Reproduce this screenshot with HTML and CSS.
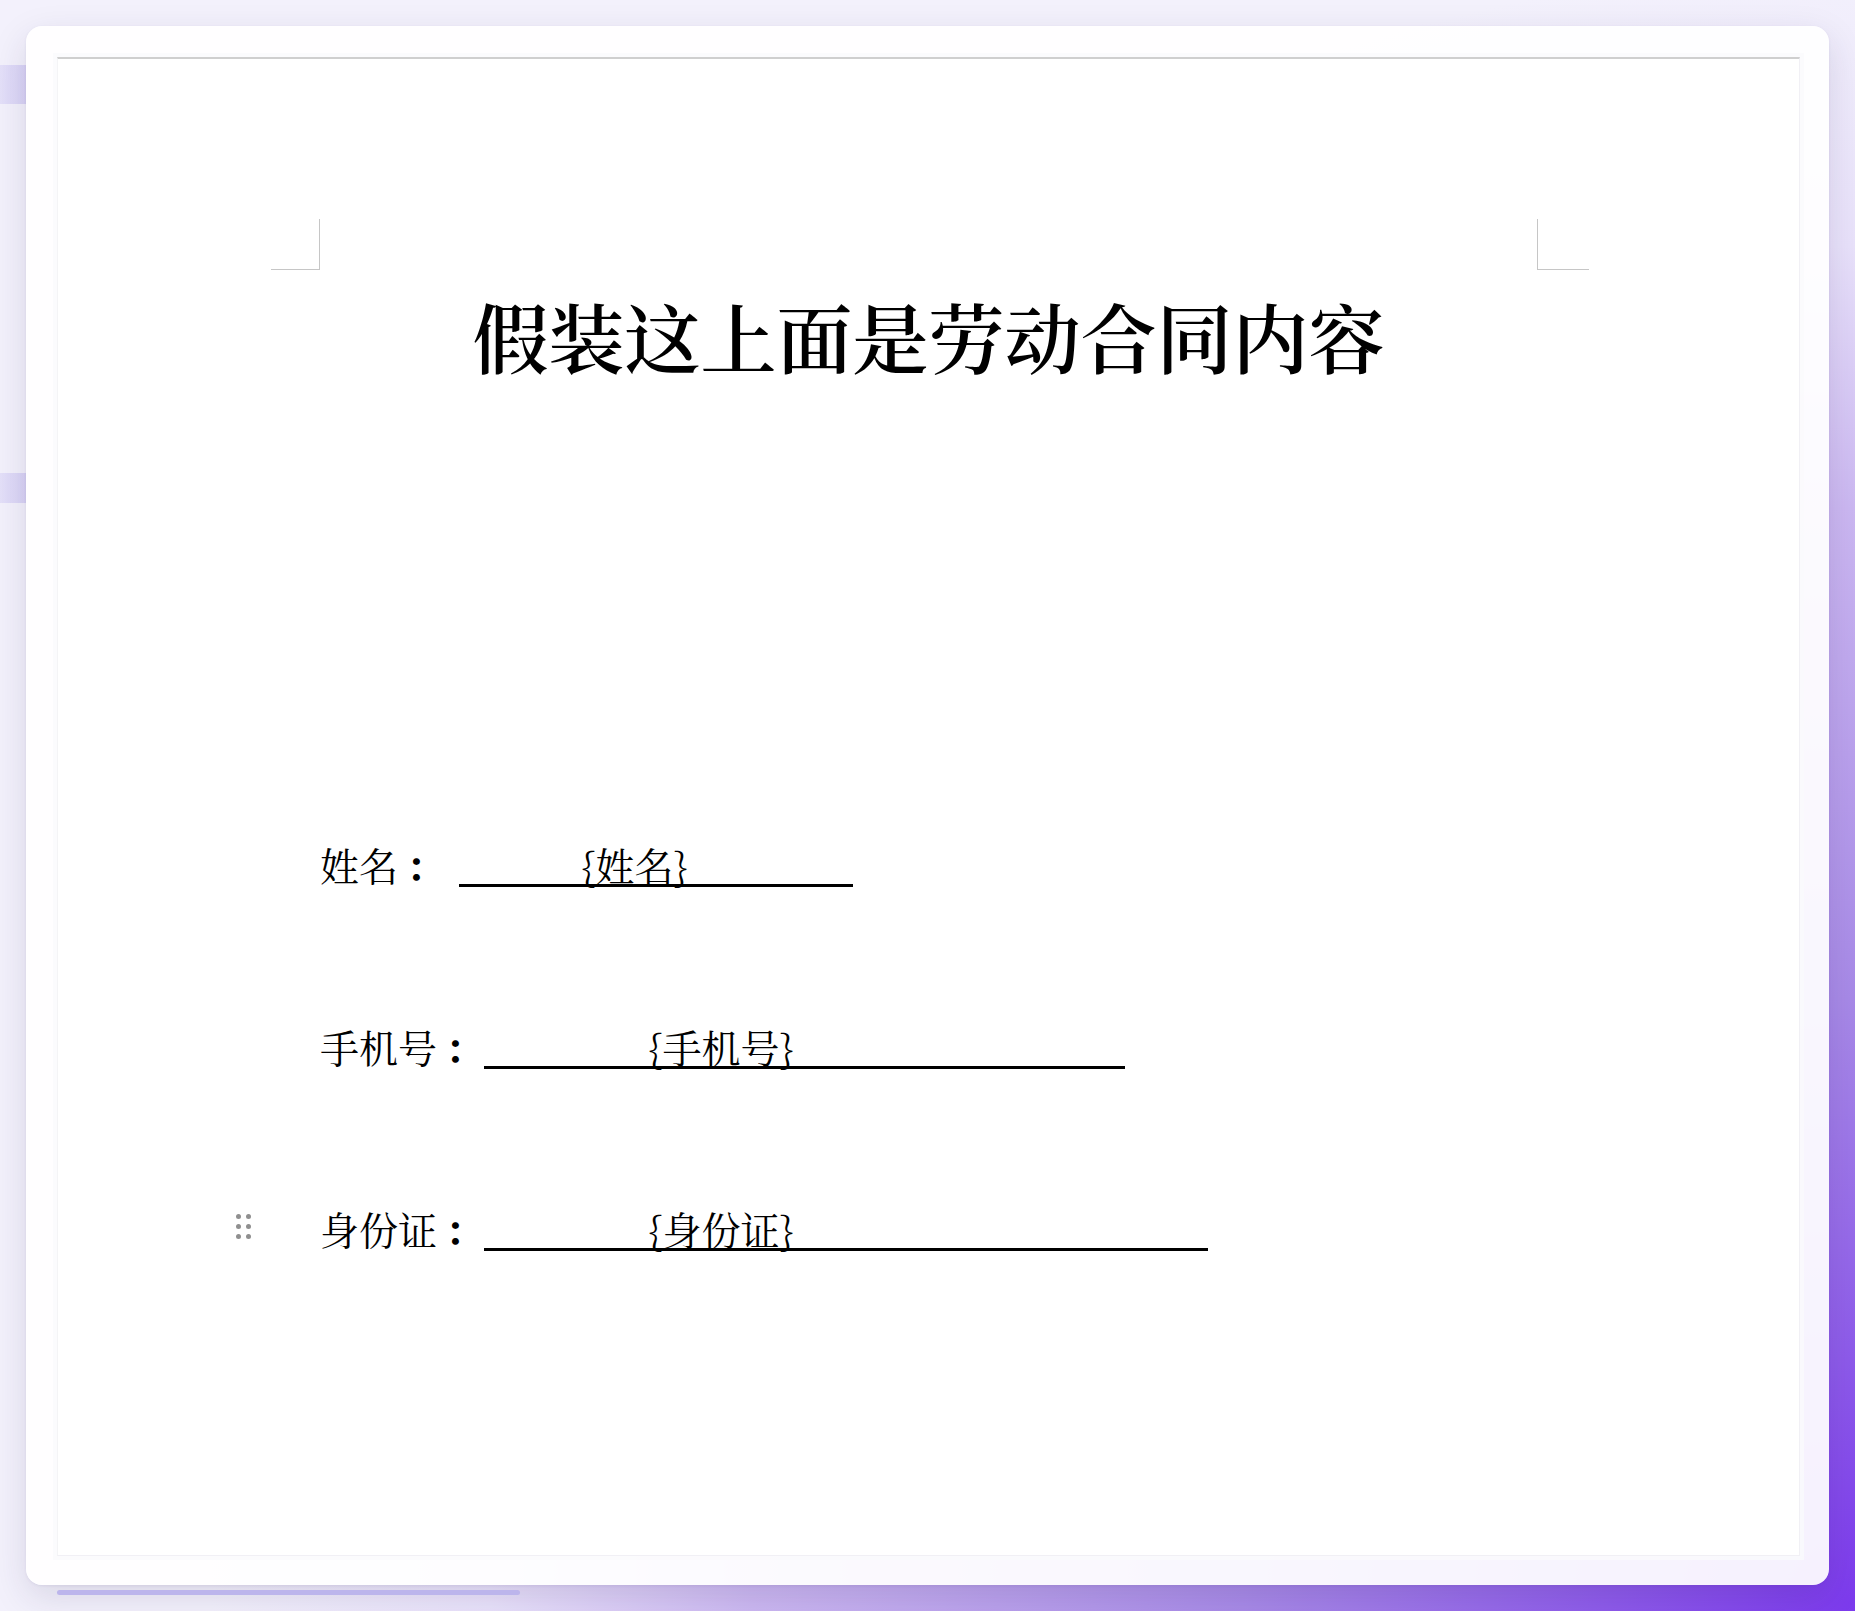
FILE: index.html
```html
<!DOCTYPE html>
<html lang="zh-CN">
<head>
<meta charset="utf-8">
<title>劳动合同</title>
<link rel="stylesheet" href="styles.css">
</head>
<body>
<div class="app">
  <aside class="sidebar">
    <div class="band band-one"></div>
    <div class="band band-two"></div>
  </aside>
  <main class="main">
    <section class="card">
      <div class="page">
        <div class="sheet">
          <div class="marks">
            <span class="mark mark-left"></span>
            <span class="mark mark-right"></span>
          </div>
          <h1 class="title">假装这上面是劳动合同内容</h1>
          <p class="row row-first">姓名<span class="colon">：</span><span class="field field-name gap-wide">{姓名}</span></p>
          <p class="row">手机号<span class="colon">：</span><span class="field field-phone">{手机号}</span></p>
          <p class="row">
            <span class="handle" aria-hidden="true">
              <i></i><i></i><i></i><i></i><i></i><i></i>
            </span>身份证<span class="colon">：</span><span class="field field-id">{身份证}</span></p>
        </div>
      </div>
    </section>
    <div class="scrollbar"></div>
  </main>
</div>
</body>
</html>
```

FILE: styles.css
```css
html, body {
  margin: 0;
  padding: 0;
  height: 100%;
}

body {
  overflow: hidden;
  background:
    radial-gradient(circle 1750px at 100% 100%, #7c3aed 0%, #a88ae8 35%, #ccb8f2 63%, #e9e2fb 78%, rgba(244, 241, 253, 0) 94%),
    #f3f1fc;
  font-family: "Noto Serif CJK SC", "Liberation Serif", "Noto Sans CJK SC", serif;
  color: #000;
}

.app {
  display: flex;
  height: 1611px;
}

.sidebar {
  width: 26px;
  flex: none;
  padding-top: 65px;
  box-sizing: border-box;
}

.band {
  background: linear-gradient(90deg, #e4e0f9 0%, #d9d3f6 100%);
}

.band-one {
  height: 39px;
}

.band-two {
  height: 30px;
  margin-top: 369px;
}

.main {
  flex: 1;
  display: flex;
  flex-direction: column;
  padding: 26px 26px 0 0;
  min-width: 0;
}

.card {
  height: 1559px;
  box-sizing: border-box;
  padding: 31px 29px 29px 31px;
  border-radius: 16px;
  background: rgba(255, 255, 255, 0.93);
  box-shadow: 0 12px 36px rgba(40, 30, 70, 0.13), 0 1px 3px rgba(70, 50, 130, 0.08);
  display: flex;
}

.page {
  flex: 1;
  background: #fff;
  border-top: 2px solid #cfcfcf;
  border-left: 1px solid #f4f4f6;
  border-right: 1px solid #f1f0f5;
  border-bottom: 1px solid #f1f0f5;
  box-shadow: 0 0 0 4px rgba(250, 250, 252, 0.8);
}

.sheet {
  padding: 160px 262px 0 262px;
}

.marks {
  display: flex;
  justify-content: space-between;
  margin: 0 -52px 0 -49px;
}

.mark {
  display: block;
  height: 51px;
  box-sizing: border-box;
  border-bottom: 1px solid #c6c6c6;
}

.mark-left {
  width: 49px;
  border-right: 1px solid #c6c6c6;
}

.mark-right {
  width: 52px;
  border-left: 1px solid #c6c6c6;
}

.title {
  margin: 20px 0 0;
  text-align: center;
  font-size: 76px;
  line-height: 91px;
  font-weight: 600;
  letter-spacing: 0;
}

.row {
  position: relative;
  margin: 122px 0 0;
  font-size: 39px;
  line-height: 60px;
  white-space: nowrap;
}

.row-first {
  margin-top: 453px;
}

.colon {
  font-family: "Noto Serif CJK TC", "Noto Serif CJK SC", serif;
  font-weight: 700;
  padding-left: 8px;
}

.field {
  display: inline-block;
  box-sizing: border-box;
  line-height: 40px;
  border-bottom: 3px solid #000;
  vertical-align: baseline;
  margin-left: 0;
}

.gap-wide {
  margin-left: 14px;
}

.field-name {
  width: 394px;
  padding-left: 122px;
}

.field-phone {
  width: 641px;
  padding-left: 164px;
}

.field-id {
  width: 724px;
  padding-left: 164px;
}

.handle {
  position: absolute;
  left: -84px;
  top: 16px;
  width: 15px;
  display: grid;
  grid-template-columns: 5px 5px;
  column-gap: 5px;
  row-gap: 5px;
}

.handle i {
  display: block;
  width: 5px;
  height: 5px;
  border-radius: 50%;
  background: #8f8f8f;
}

.scrollbar {
  margin: 5px 0 0 31px;
  width: 463px;
  height: 5px;
  border-radius: 3px;
  background: #bcb5ec;
}
```
